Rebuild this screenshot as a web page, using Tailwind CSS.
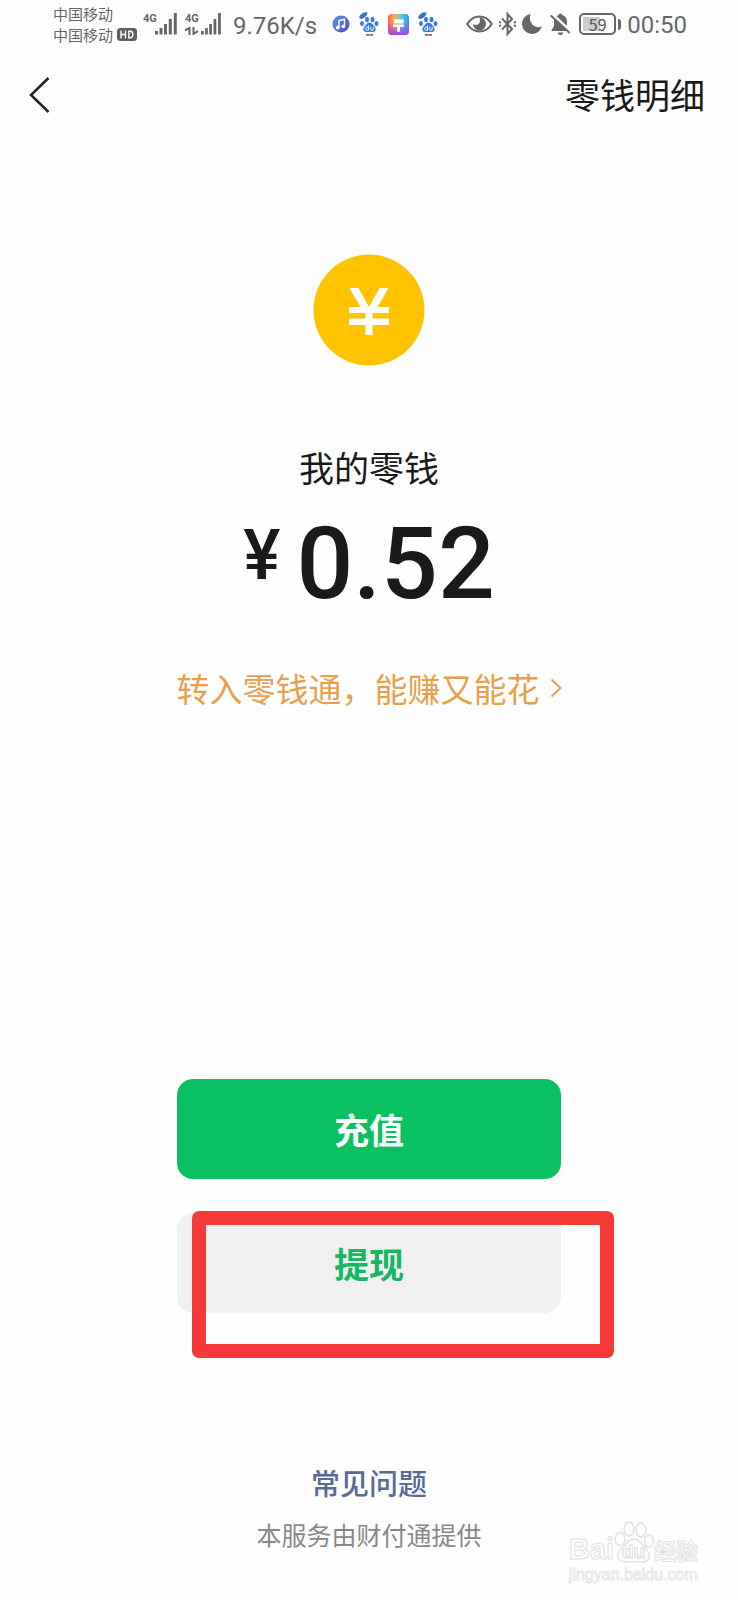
<!DOCTYPE html>
<html lang="zh-CN">
<head>
<meta charset="utf-8">
<meta name="viewport" content="width=device-width, initial-scale=1">
<title>我的零钱</title>
<script src="https://cdn.jsdelivr.net/npm/@tailwindcss/browser@4"></script>
</head>
<body class="relative flex min-h-screen flex-col bg-[#fefefe] font-['Noto_Sans_CJK_SC',sans-serif] text-[#1a1a1a]">

<svg class="hidden" aria-hidden="true">
  <symbol id="bars" viewBox="0 0 22 22">
    <path d="M0 18h3v3.500H0zM4.500 15h3v6.500h-3zM9 11h3v10.500H9zM13.800 6h3v15.500h-3zM18.800 0h3v21.500h-3z"/>
  </symbol>
  <symbol id="paw" viewBox="0 0 20 24">
    <path d="M0 5.500C1 2 4 0 8.500.2 8.300 3.500 5.500 6.500 1.800 7z" fill="#3f6fc4"/>
    <g fill="#3b7be0">
      <ellipse cx="3" cy="11.500" rx="2" ry="2.600"/>
      <ellipse cx="8" cy="7.500" rx="2" ry="2.700"/>
      <ellipse cx="13.500" cy="7.500" rx="2" ry="2.700"/>
      <ellipse cx="17.500" cy="11.500" rx="2" ry="2.600"/>
      <path d="M10.500 10.500c2.500 0 3.300 2.300 4.800 3.800 2 1.900 2 5.700-1.300 5.700H7c-3.300 0-3.300-3.800-1.300-5.700 1.500-1.500 2.300-3.800 4.800-3.800z"/>
    </g>
    <path d="M9.500 13.500v5M9.500 16.600a1.500 1.500 0 1 0 0 .1M11.700 15v2.300q.2 1.200 1.400 1.100 1.100-.1 1.100-1.200V15" fill="none" stroke="#fff" stroke-width="1"/>
    <path d="M7 22h3.500v1.800H7z" fill="#4978cf"/><path d="M10.500 22H14v1.800h-3.500z" fill="#d65454"/>
  </symbol>
</svg>

<header>
  <div class="flex h-12 items-center pl-[53px] pr-[51px] text-[#666]">
    <div class="flex flex-col text-[15px] leading-[21px]">
      <span>中国移动</span>
      <span class="flex items-center gap-1">中国移动
        <svg class="h-[13px] w-5" viewBox="0 0 20 13" role="img" aria-label="HD"><rect width="20" height="13" rx="3.500" fill="#5e5e5e"/><path d="M4 2.500v8M8.500 2.500v8M4 6.500h4.500M11.800 3.200h1.400q2.700.2 2.700 3.300t-2.700 3.300h-1.400z" fill="none" stroke="#fff" stroke-width="1.400"/></svg>
      </span>
    </div>
    <div class="ml-1.5 flex">
      <span class="h-5 w-3 font-['Roboto',sans-serif] text-[11px] font-bold leading-3">4G</span>
      <svg class="h-[22px] w-[22px] fill-[#666]"><use href="#bars"/></svg>
    </div>
    <div class="ml-2 flex">
      <div class="flex w-4 flex-col justify-between">
        <span class="font-['Roboto',sans-serif] text-[11px] font-bold leading-3">4G</span>
        <svg class="h-2 w-3.5" viewBox="0 0 14 8" fill="none" stroke="#666" stroke-width="2"><path d="M0 3.500 4.500 1v7M8.500 0v7L13 4"/></svg>
      </div>
      <svg class="h-[22px] w-[20px] fill-[#666]" viewBox="0 0 22 22" preserveAspectRatio="none"><use href="#bars"/></svg>
    </div>
    <span class="ml-3 pt-1 font-['Roboto',sans-serif] text-[24px] leading-8">9.76K/s</span>
    <div class="ml-auto flex items-center gap-[9px]">
      <svg class="h-[18px] w-[18px]" viewBox="0 0 18 18"><defs><linearGradient id="m" x2="1" y2="1"><stop stop-color="#4c9be8"/><stop offset="1" stop-color="#5c42c8"/></linearGradient></defs><circle cx="9" cy="9" r="8.500" fill="url(#m)"/><path d="M7 12.500V5.500l5.500-1.300v7" fill="none" stroke="#fff" stroke-width="1.400"/><circle cx="5.800" cy="12.500" r="1.900" fill="#fff"/><circle cx="11.300" cy="11.300" r="1.900" fill="#fff"/></svg>
      <svg class="h-6 w-5"><use href="#paw"/></svg>
      <svg class="h-[21px] w-[21px]" viewBox="0 0 21 21"><defs><linearGradient id="p" x2="1"><stop stop-color="#ff5b58"/><stop offset=".3" stop-color="#ffb04a"/><stop offset=".6" stop-color="#54d5d0"/><stop offset="1" stop-color="#4689ee"/></linearGradient><linearGradient id="q" x2="0" y2="1"><stop offset=".4" stop-color="#b040e0" stop-opacity="0"/><stop offset="1" stop-color="#9b46e5"/></linearGradient></defs><rect width="21" height="21" rx="4" fill="url(#p)"/><rect width="21" height="21" rx="4" fill="url(#q)"/><path d="M6 5l2 .8L10 5l3 .8L15.500 5v4.500H6zM5 10.500h11V13h-4v4q-1.500 2-3 0v-4H5z" fill="#fff"/></svg>
      <svg class="h-6 w-5"><use href="#paw"/></svg>
    </div>
    <div class="ml-[28px] flex items-center gap-1.5">
      <svg class="h-[18px] w-[27px]" viewBox="0 0 27 18"><path d="M1.200 9Q6 1.500 13.500 1.500T25.800 9Q21 16.500 13.500 16.500T1.200 9z" fill="none" stroke="#666" stroke-width="2"/><path d="M13.500 2.500A6.500 6.500 0 1 1 7 9q2.500 1.500 5 .5 3-2 1.500-7z" fill="#666"/></svg>
      <svg class="h-6 w-[17px]" viewBox="0 0 17 24" fill="none" stroke="#666" stroke-width="2"><path d="M3 6.500 13 17l-4.500 5V2L13 7 3 17.500M0 9.500l2 1.500M0 14.500 2 13M17 9.500 15 11M17 14.500 15 13"/></svg>
      <svg class="h-5 w-5" viewBox="0 0 20 20" fill="#666"><path d="M8.500 0C3.500.8 0 5 0 10a10 10 0 0 0 10 10c4.500 0 8.500-3 9.800-7.500C14 15.500 5.500 9.500 8.500 0z"/></svg>
      <svg class="ml-0.5 h-[22px] w-[21px]" viewBox="0 0 21 22"><path d="M10.500.5c1.300 0 1.800.8 1.800 1.600 3 .9 4.700 3.300 4.700 6.400v5l2.500 3.500v1H1.500v-1L4 13.500v-5C4 5.400 5.700 3 8.700 2.100c0-.8.5-1.600 1.800-1.600zM8 19.500h5a2.500 2.500 0 0 1-5 0z" fill="#666"/><path d="m2 1 18 16.500" stroke="#fefefe" stroke-width="3"/><path d="m.7 2.500 19 17.500" stroke="#666" stroke-width="2"/></svg>
      <div class="ml-0.5 flex items-center gap-0.5">
        <span class="flex h-[22px] w-[37px] rounded-[5px] border-2 border-[#666] p-0.5 text-[16px] leading-[14px] text-[#555]"><span class="flex-1 bg-[linear-gradient(90deg,#ccc_59%,#fefefe_59%)] text-center">59</span></span>
        <span class="h-[11px] w-[3px] rounded-r-sm bg-[#666]"></span>
      </div>
    </div>
    <span class="ml-1.5 pt-0.5 font-['Roboto',sans-serif] text-[24px] leading-8">00:50</span>
  </div>
  <nav class="flex h-[94px] items-center justify-between pl-[29px] pr-[33px]">
    <button type="button" aria-label="返回"><svg class="h-9 w-[21px]" viewBox="0 0 21 36" fill="none" stroke="#222" stroke-width="2.500"><path d="M19.500 1 2 18l17.500 17"/></svg></button>
    <a href="#" class="pb-0.5 text-[35px] leading-[48px]">零钱明细</a>
  </nav>
</header>

<main class="flex flex-col items-center">
  <svg class="mt-[112px] h-28 w-28" viewBox="0 0 112 112" role="img" aria-label="零钱"><circle cx="56" cy="56" r="55.500" fill="#ffc300"/><path d="M36.500 34h9L56 53l10.500-19h9L64.500 53H76v6H59.500v5.500H76V71H59.500v10h-7V71H36v-6.500h16.500V59H36v-6h11.500z" fill="#fff"/></svg>
  <h1 class="mt-[77px] text-[35px] leading-[48px]">我的零钱</h1>
  <p class="mt-[18px] flex items-start gap-4 font-['Roboto',sans-serif] font-medium">
    <span class="text-[70px] leading-[92px]">¥</span>
    <span class="text-[100px] leading-[110px]">0.52</span>
  </p>
  <a href="#" class="mt-[45px] flex items-center gap-2.5 text-[33px] leading-[48px] text-[#e8a04c]">转入零钱通，能赚又能花
    <svg class="h-5 w-3" viewBox="0 0 12 20" fill="none" stroke="#e8a04c" stroke-width="2"><path d="m1.500 1.500 9 8.500-9 8.500"/></svg>
  </a>
  <div class="mt-[367px] flex w-[52%] flex-col gap-[34px] text-[35px] font-bold">
    <button type="button" class="h-[100px] rounded-2xl bg-[#09c160] text-white">充值</button>
    <div class="relative">
      <button type="button" class="h-[100px] w-full rounded-2xl bg-[#f1f1f1] text-[#16b864]">提现</button>
      <div class="pointer-events-none absolute -right-[53px] -top-0.5 left-[15px] h-[147px] rounded-[7px] border-[14px] border-[#f63a3a]"></div>
    </div>
  </div>
</main>

<footer class="mt-[149px] flex flex-col items-center gap-3">
  <a href="#" class="text-[29px] font-medium leading-10 text-[#576b95]">常见问题</a>
  <p class="text-[25px] leading-10 text-[#888]">本服务由财付通提供</p>
</footer>

<aside class="absolute bottom-[15px] right-10 flex flex-col text-[#fefefe]" aria-label="百度经验">
  <div class="flex items-end font-['Liberation_Sans',sans-serif] text-[29px] font-bold leading-8 [-webkit-text-stroke:1px_#e2e2e2]">
    <span>Bai</span>
    <svg class="h-[46px] w-10" viewBox="0 0 40 46" fill="#fefefe" stroke="#e0e0e0" stroke-width="1.300"><ellipse cx="6" cy="20" rx="5" ry="6.500"/><ellipse cx="15" cy="10" rx="5" ry="7"/><ellipse cx="27" cy="11" rx="5" ry="7"/><ellipse cx="35" cy="22" rx="4.500" ry="6"/><path d="M20 20c6 0 8 6 12 10 6 6 4 13-4 13-5 0-11-1-16 0-8 0-11-7-5-13 5-4 7-10 13-10z"/><text x="19.500" y="39" text-anchor="middle" font-family="Liberation Sans, sans-serif" font-size="19" font-weight="700" stroke-width="1">du</text></svg>
    <span class="font-['Noto_Sans_CJK_SC',sans-serif] text-[22px]">经验</span>
  </div>
  <span class="font-['Liberation_Sans',sans-serif] text-[16px] leading-5 [-webkit-text-stroke:1px_#e8e8e8]">jingyan.baidu.com</span>
</aside>
</body>
</html>
